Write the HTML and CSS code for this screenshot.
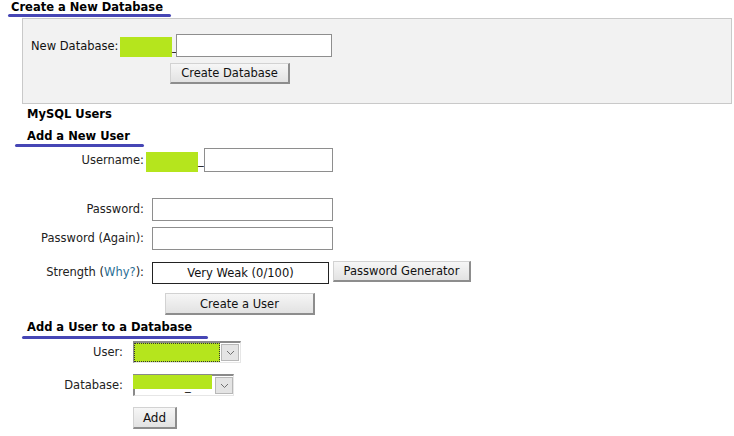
FILE: index.html
```html
<!DOCTYPE html>
<html>
<head>
<meta charset="utf-8">
<link rel="stylesheet" href="styles.css">
</head>
<body>
<div class="page">
  <h2 class="title title-db">Create a New Database</h2>
  <div class="panel">
    <div class="db-row">
      <span class="lbl">New Database:</span>
      <span class="mask mask-db"></span><span class="us">_</span>
      <input class="field field-db" type="text">
    </div>
    <button class="btn btn-db">Create Database</button>
  </div>

  <h3 class="sub">MySQL Users</h3>
  <h2 class="title title-user">Add a New User</h2>
  <div class="user-form">
    <div class="frow frow-name">
      <span class="flbl">Username:</span>
      <span class="fval"><span class="mask mask-user"></span><span class="us">_</span><input class="field field-name" type="text"></span>
    </div>
    <div class="frow frow-pw">
      <span class="flbl">Password:</span>
      <span class="fval"><input class="field field-pw" type="password"></span>
    </div>
    <div class="frow frow-pw2">
      <span class="flbl">Password (Again):</span>
      <span class="fval"><input class="field field-pw" type="password"></span>
    </div>
    <div class="frow frow-str">
      <span class="flbl">Strength (<a class="why" href="#">Why?</a>):</span>
      <span class="fval"><span class="strength">Very Weak (0/100)</span><button class="btn btn-gen">Password Generator</button></span>
    </div>
    <div class="frow-btn"><button class="btn btn-user">Create a User</button></div>
  </div>

  <h2 class="title title-add">Add a User to a Database</h2>
  <div class="add-form">
    <div class="arow arow-user">
      <span class="albl">User:</span>
      <span class="select select-user"><span class="sel-val sel-val-user"></span><span class="sel-arrow"><svg width="9" height="6" viewBox="0 0 9 6"><path d="M1 1 L4.5 4.5 L8 1" fill="none" stroke="#707070" stroke-width="1"/></svg></span></span>
    </div>
    <div class="arow arow-db">
      <span class="albl">Database:</span>
      <span class="select select-db"><span class="sel-val sel-val-db"><span class="sel-us">_</span></span><span class="sel-arrow"><svg width="9" height="6" viewBox="0 0 9 6"><path d="M1 1 L4.5 4.5 L8 1" fill="none" stroke="#707070" stroke-width="1"/></svg></span></span>
    </div>
    <div class="arow-btn"><button class="btn btn-add">Add</button></div>
  </div>
</div>
</body>
</html>
```

FILE: styles.css
```css
html, body {
  margin: 0;
  padding: 0;
  background: #ffffff;
}
body {
  font-family: "DejaVu Sans", Verdana, sans-serif;
  font-size: 11.5px;
  color: #111;
}
.page {
  width: 734px;
  height: 436px;
  overflow: hidden;
}

/* titles with rounded blue underline */
.title {
  display: inline-block;
  margin: 0;
  font-size: 11.5px;
  font-weight: bold;
  line-height: 13px;
  color: #000;
}
.title::after {
  content: "";
  display: block;
  height: 3px;
  border-radius: 2px;
  background: #4646b5;
}
.title-db {
  margin-left: 11px;
}
.title-db::after {
  margin: 0 -8px 0 -3px;
}
.title-user {
  margin-left: 27px;
}
.title-user::after {
  margin: 1px -14px 0 -12px;
}
.title-add {
  margin-left: 27px;
  margin-top: 6px;
}
.title-add::after {
  margin: 2px -16px 0 -5px;
}

/* panel */
.panel {
  margin: 1px 2px 0 22px;
  height: 86px;
  box-sizing: border-box;
  border: 1px solid #c9c9c9;
  background: #f2f2f2;
  padding: 15px 0 0 8px;
}
.db-row {
  display: flex;
  align-items: flex-start;
  height: 23px;
}
.lbl {
  line-height: 23px;
  margin-top: 1px;
  width: 89px;
  white-space: nowrap;
}
.mask {
  display: inline-block;
  background: #b5e51d;
}
.mask-db {
  width: 52px;
  height: 20px;
  margin-top: 3px;
}
.us {
  display: inline-block;
  width: 4px;
  line-height: 23px;
  margin-top: 1px;
  overflow: visible;
  color: #222;
}
.field {
  box-sizing: border-box;
  border: 1px solid #8e8e8e;
  background: #fff;
  height: 23px;
  padding: 0 3px;
  margin: 0;
  font: inherit;
}
.field-db { width: 156px; }

.btn {
  box-sizing: border-box;
  font-family: "DejaVu Sans", Verdana, sans-serif;
  font-size: 11.5px;
  color: #111;
  background: linear-gradient(#f6f6f6, #e2e2e2);
  border: 1px solid #d2d2d2;
  border-right: 2px solid #8d8d8d;
  border-bottom: 2px solid #8d8d8d;
  padding: 0;
  margin: 0;
  cursor: pointer;
  white-space: nowrap;
}
.btn-db {
  display: block;
  margin: 6px 0 0 139px;
  width: 120px;
  height: 21px;
}

.sub {
  margin: 4px 0 0 27px;
  font-size: 11.5px;
  font-weight: bold;
  line-height: 13px;
  color: #000;
}
.sub + .title { margin-top: 9px; }

/* user form */
.user-form {
  display: flex;
  flex-direction: column;
  margin-top: 1px;
}
.frow {
  display: flex;
  align-items: flex-start;
}
.flbl {
  width: 146px;
  box-sizing: border-box;
  padding-right: 2px;
  text-align: right;
  color: #222;
  white-space: nowrap;
}
.fval {
  display: flex;
  align-items: flex-start;
}
.frow-name { height: 24px; }
.frow-name .flbl { line-height: 24px; }
.mask-user {
  width: 52px;
  height: 20px;
  margin-top: 4px;
}
.frow-name .us { margin-top: 1px; width: 6px; }
.field-name {
  width: 129px;
  height: 24px;
}
.frow-pw { margin-top: 26px; }
.frow-pw2 { margin-top: 6px; }
.frow-pw .flbl, .frow-pw2 .flbl { line-height: 23px; }
.field-pw {
  width: 181px;
  margin-left: 6px;
}
.frow-str { margin-top: 11px; }
.frow-str .flbl { line-height: 22px; }
.why {
  color: #2a6f96;
  text-decoration: none;
}
.strength {
  display: inline-block;
  box-sizing: border-box;
  margin: 1px 0 0 6px;
  width: 177px;
  height: 22px;
  line-height: 20px;
  border: 1px solid #222;
  text-align: center;
  color: #111;
  background: #fff;
  white-space: nowrap;
}
.btn-gen {
  margin-left: 4px;
  width: 138px;
  height: 21px;
}
.frow-btn { margin-top: 9px; }
.btn-user {
  margin-left: 165px;
  width: 150px;
  height: 22px;
}

/* add to db form */
.add-form {
  display: flex;
  flex-direction: column;
  margin-top: 0;
}
.arow {
  display: flex;
  align-items: center;
}
.albl {
  width: 124px;
  box-sizing: border-box;
  padding-right: 1px;
  text-align: right;
  color: #222;
}
.select {
  display: flex;
  align-items: center;
  box-sizing: border-box;
  height: 22px;
  margin-left: 9px;
  background: #fff;
  border-top: 2px solid #8a8a8a;
  border-left: 2px solid #8a8a8a;
  border-right: 1px solid #e6e6e6;
  border-bottom: 1px solid #e6e6e6;
}
.select-user { width: 108px; }
.select-db { width: 101px; }
.sel-val {
  display: block;
  background: #b5e51d;
  position: relative;
}
.sel-val-user {
  width: 86px;
  height: 19px;
  box-sizing: border-box;
  border: 1px dotted #333;
  margin-left: -1px;
}
.sel-val-db {
  width: 80px;
  height: 14px;
  margin-left: -2px;
  margin-top: -1px;
  align-self: flex-start;
}
.sel-us {
  position: absolute;
  left: 52px;
  top: 5px;
  line-height: 13px;
  color: #222;
}
.sel-arrow {
  display: flex;
  align-items: center;
  justify-content: center;
  box-sizing: border-box;
  width: 18px;
  height: 17px;
  margin-left: 1px;
  background: #e4e4e4;
  border: 1px solid #b8b8b8;
}
.select-db .sel-arrow { margin-left: 3px; }
.arow-user { margin-top: 2px; }
.arow-db { margin-top: 11px; }
.arow-btn { margin-top: 11px; }
.btn-add {
  margin-left: 133px;
  width: 44px;
  height: 22px;
  font-size: 12px;
}
```
